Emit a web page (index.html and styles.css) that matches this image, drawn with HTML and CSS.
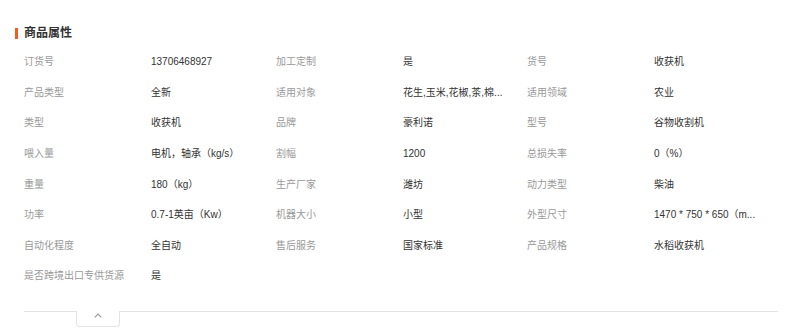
FILE: index.html
```html
<!DOCTYPE html>
<html lang="zh-CN">
<head>
<meta charset="utf-8">
<title>商品属性</title>
<link rel="stylesheet" href="styles.css">
</head>
<body>
<div class="panel">
  <div class="head">
    <span class="bar"></span>
    <h2 class="title">商品属性</h2>
  </div>
  <div class="attrs">
    <div class="k">订货号</div><div class="v">13706468927</div>
    <div class="k">加工定制</div><div class="v">是</div>
    <div class="k">货号</div><div class="v">收获机</div>

    <div class="k">产品类型</div><div class="v">全新</div>
    <div class="k">适用对象</div><div class="v" title="花生,玉米,花椒,茶,棉花,水稻">花生,玉米,花椒,茶,棉...</div>
    <div class="k">适用领域</div><div class="v">农业</div>

    <div class="k">类型</div><div class="v">收获机</div>
    <div class="k">品牌</div><div class="v">豪利诺</div>
    <div class="k">型号</div><div class="v">谷物收割机</div>

    <div class="k">喂入量</div><div class="v">电机，轴承（kg/s）</div>
    <div class="k">割幅</div><div class="v">1200</div>
    <div class="k">总损失率</div><div class="v">0（%）</div>

    <div class="k">重量</div><div class="v">180（kg）</div>
    <div class="k">生产厂家</div><div class="v">潍坊</div>
    <div class="k">动力类型</div><div class="v">柴油</div>

    <div class="k">功率</div><div class="v">0.7-1英亩（Kw）</div>
    <div class="k">机器大小</div><div class="v">小型</div>
    <div class="k">外型尺寸</div><div class="v" title="1470 * 750 * 650（mm）">1470 * 750 * 650（m...</div>

    <div class="k">自动化程度</div><div class="v">全自动</div>
    <div class="k">售后服务</div><div class="v">国家标准</div>
    <div class="k">产品规格</div><div class="v">水稻收获机</div>

    <div class="k">是否跨境出口专供货源</div><div class="v">是</div>
  </div>
  <div class="foot">
    <button class="toggle" type="button" aria-label="收起">
      <svg width="8" height="5" viewBox="0 0 8 5"><path d="M0.8 4.3 L4 1.1 L7.2 4.3" fill="none" stroke="#9a9a9a" stroke-width="1.1"/></svg>
    </button>
  </div>
</div>
</body>
</html>
```

FILE: styles.css
```css
* { box-sizing: border-box; }
html, body { margin: 0; padding: 0; background: #fff; }
body {
  font-family: "Liberation Sans", "Noto Sans CJK SC", sans-serif;
  font-size: 10px;
  color: #333;
  width: 803px;
  height: 329px;
  overflow: hidden;
}
.panel {
  padding: 26px 25px 0 15px;
}
.head {
  display: flex;
  align-items: center;
  gap: 6px;
  height: 14px;
}
.bar {
  width: 3px;
  height: 11px;
  background: #f05a23;
}
.title {
  margin: 0;
  font-size: 12px;
  font-weight: bold;
  line-height: 14px;
  color: #333;
}
.attrs {
  margin-top: 7px;
  padding-left: 9px;
  display: grid;
  grid-template-columns: 127px 125px 127px 124px 127px 124px;
  grid-auto-rows: 30.6px;
  align-items: center;
}
.k {
  color: #999;
  line-height: 14px;
  white-space: nowrap;
}
.v {
  color: #333;
  line-height: 14px;
  white-space: nowrap;
}
.foot {
  margin-top: 19px;
  margin-left: 9px;
  border-top: 1px solid #e3e3e3;
  width: 754px;
  height: 20px;
}
.toggle {
  display: flex;
  align-items: center;
  justify-content: center;
  margin: -1px 0 0 52px;
  width: 44px;
  height: 16px;
  padding: 0 0 5px;
  background: #fff;
  border: 1px solid #e3e3e3;
  border-top: none;
  border-radius: 0 0 4px 4px;
}
```
